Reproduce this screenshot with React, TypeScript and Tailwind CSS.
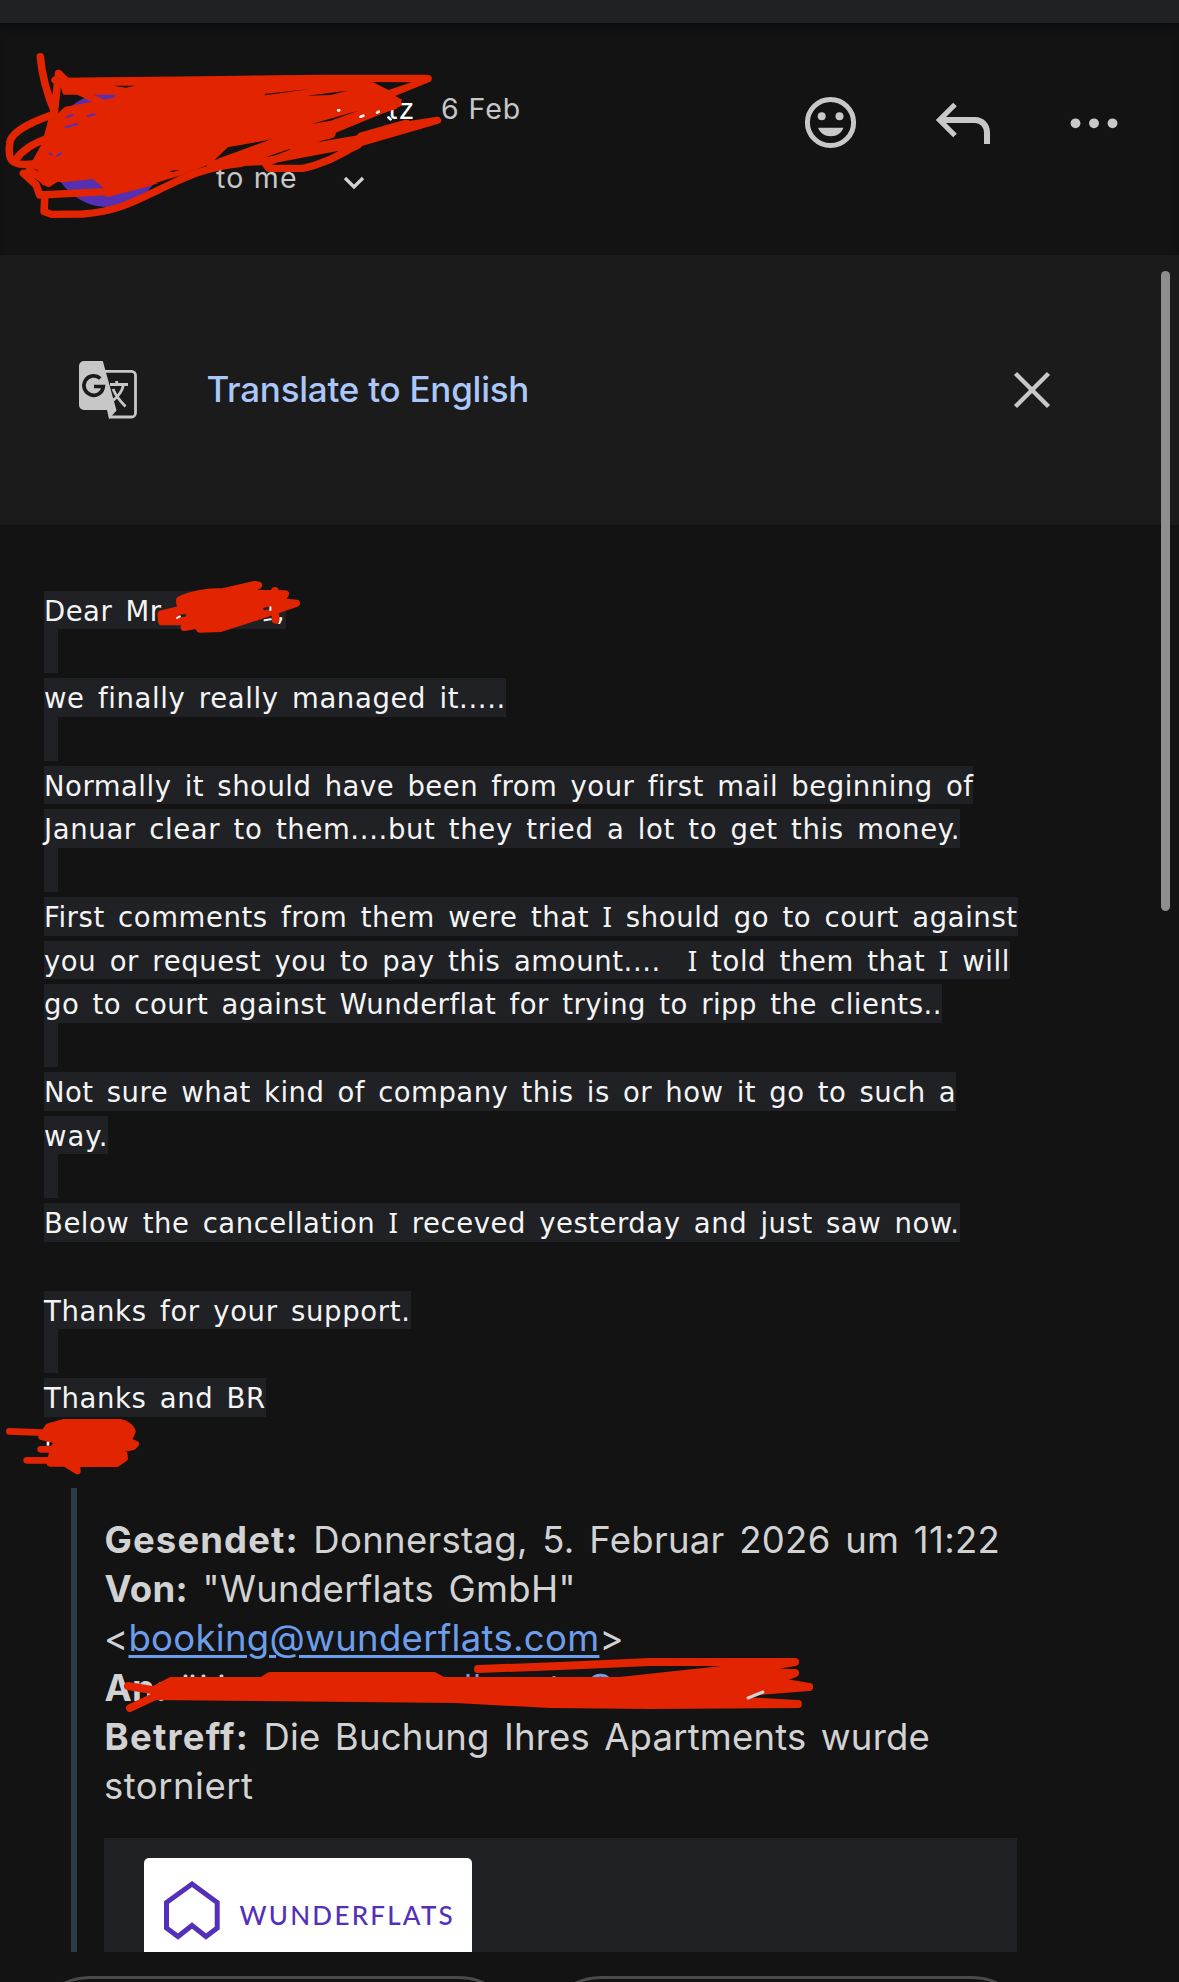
const RED = '#e22400'

type Line = { text: string; tracking: string } | 'mark' | 'gap'

const lines: Line[] = [
  { text: 'we finally really managed it.....', tracking: 'tracking-[0.62px]' },
  'mark',
  { text: 'Normally it should have been from your first mail beginning of', tracking: 'tracking-[0.5px]' },
  { text: 'Januar clear to them....but they tried a lot to get this money.', tracking: 'tracking-[0.64px]' },
  'mark',
  { text: 'First comments from them were that I should go to court against', tracking: 'tracking-[0.58px]' },
  { text: 'you or request you to pay this amount....  I told them that I will', tracking: 'tracking-[0.6px]' },
  { text: 'go to court against Wunderflat for trying to ripp the clients..', tracking: 'tracking-[0.5px]' },
  'mark',
  { text: 'Not sure what kind of company this is or how it go to such a', tracking: 'tracking-[0.475px]' },
  { text: 'way.', tracking: 'tracking-[1px]' },
  'mark',
  { text: 'Below the cancellation I receved yesterday and just saw now.', tracking: 'tracking-[0.53px]' },
  'gap',
  { text: 'Thanks for your support.', tracking: 'tracking-[0.65px]' },
  'mark',
  { text: 'Thanks and BR', tracking: 'tracking-[0.6px]' },
]

const highlight = 'inline-block h-[38.75px] bg-[#202124] pt-px leading-[39.25px] whitespace-pre [word-spacing:4px] align-top'

const Row = ({ line }: { line: Line }) => {
  if (line === 'gap') return <div className="h-[43.75px]" />
  if (line === 'mark') return <div className="-mt-[5px] mb-[5px] h-[43.75px] w-3.5 bg-[#202124]" />
  const parts = line.text.split(/(\bI\b)/)
  return (
    <div className="h-[43.75px]">
      <span className={`${highlight} ${line.tracking}`}>
        {parts.map((part, i) =>
          part === 'I' ? <span key={i} className="font-['Noto_Sans',sans-serif] text-[28px] leading-[0]">I</span> : part
        )}
      </span>
    </div>
  )
}

const Header = () => (
  <header className="flex h-[231px] justify-between bg-[#131314] font-[Inter,sans-serif] text-[#c7c7c7] shadow-[inset_0_8px_10px_-6px_#0c0c0d]">
    <div className="flex">
      <div className="mt-[69px] ml-[51px] size-[114px] rounded-full bg-[#5630b0]" />
      <div className="ml-[51px] pt-[65.5px]">
        <div className="flex h-10 w-[305px] items-center justify-end text-[28.5px] tracking-[0.9px]">
          <span className="mr-[26px] text-white">tz</span>
          <span>6 Feb</span>
        </div>
        <div className="mt-[28.5px] flex h-10 items-center text-[28.5px] tracking-[1.2px]">
          <span>to me</span>
          <svg className="mt-2.5 ml-[44px] h-4 w-6" viewBox="0 0 24 16" fill="none" stroke="#d2d2d2" strokeWidth="3.3">
            <path d="M3 3l9 9 9-9" />
          </svg>
        </div>
      </div>
    </div>
    <div className="mr-[61px] flex pt-[68px]">
      <svg className="h-[60px] w-[60px]" viewBox="0 0 60 60" fill="#c8c8c8">
        <circle cx="30.5" cy="30.5" r="23.1" fill="none" stroke="#c8c8c8" strokeWidth="5" />
        <circle cx="21.700" cy="24.200" r="4" />
        <circle cx="39.500" cy="24.200" r="4" />
        <path d="M18 35.700h25.500c-2 5-6.500 8.500-12.700 8.500s-10.800-3.500-12.800-8.500z" />
      </svg>
      <svg className="ml-[72px] h-[60px] w-[60px]" viewBox="0 0 60 60" fill="none" stroke="#c8c8c8">
        <path d="M23 12.500L7.500 28 23 43.500" strokeWidth="5.200" />
        <path d="M8 28H43c7 0 12 5.500 12 12.500v11.500" strokeWidth="6" />
      </svg>
      <svg className="ml-[72px] h-[60px] w-[54px]" viewBox="0 0 54 60" fill="#c8c8c8">
        <circle cx="11.500" cy="31.300" r="4.900" />
        <circle cx="30" cy="31.300" r="4.900" />
        <circle cx="48.500" cy="31.300" r="4.900" />
      </svg>
    </div>
  </header>
)

const TranslateBar = () => (
  <div className="flex h-[270px] items-center bg-[#1b1b1b] pl-[79px]">
    <svg className="size-[58px]" viewBox="0 0 58 58">
      <path d="M25 10.300h27.500a4 4 0 014 4v37.700a4 4 0 01-4 4H30" fill="none" stroke="#c7c7c7" strokeWidth="2.800" />
      <path d="M31 23.500h18M37.700 20v3.500M44.500 24c-1.500 7-6 12-11 16M34 28c2.500 6 7 12 12.500 17.500" fill="none" stroke="#c7c7c7" strokeWidth="2.800" />
      <path d="M5 0h18.800L37.500 49.500 30 58 28 49H5a5 5 0 01-5-5V5a5 5 0 015-5z" fill="#c7c7c7" />
      <path d="M21.300 17.500A9.700 9.700 0 1024.300 25.500H15" fill="none" stroke="#1b1b1b" strokeWidth="3.700" />
    </svg>
    <span className="-mt-px ml-[69.500px] font-[Inter,sans-serif] text-[35px] font-medium tracking-[-0.25px] text-[#abc7fa]">Translate to English</span>
    <svg className="mr-[127px] ml-auto size-10" viewBox="0 0 40 40" stroke="#c8c8c8" strokeWidth="4.400">
      <path d="M3.500 3.500l33 33M36.500 3.500l-33 33" />
    </svg>
  </div>
)

const Quote = () => (
  <div className="mt-[22px] ml-[71px] flex h-[464px] overflow-hidden border-l-[6px] border-[#2b3d44]">
    <div className="w-[940px] pt-[28px] pl-[27px] font-[Inter,sans-serif] text-[36.500px] leading-[49.200px] tracking-[0.3px] text-[#d2d2d3] [word-spacing:4px]">
      <div className="ml-[0.500px]"><b className="tracking-[1.100px]">Gesendet:</b> Donnerstag, 5. Februar 2026 um 11:22</div>
      <div className="ml-[0.500px]"><b>Von:</b> "Wunderflats GmbH"</div>
      <div>&lt;<span className="text-[#6d9eeb] underline decoration-[3px] underline-offset-[4px]">booking@wunderflats.com</span>&gt;</div>
      <div className="ml-[0.500px]"><b>An:</b></div>
      <div className="ml-[0.500px] tracking-[0.200px] [word-spacing:3.800px]"><b className="tracking-[1.250px]">Betreff:</b> Die Buchung Ihres Apartments wurde</div>
      <div className="tracking-[0.500px]">storniert</div>
      <div className="mt-[27px] h-[130px] bg-[#202124] pt-5 pl-10">
        <div className="flex h-[110px] w-[328px] rounded-t-[5px] bg-white">
          <svg className="mt-[21px] ml-[19px] h-[64px] w-[58px]" viewBox="0 0 58 64" fill="none" stroke="#5430b8" strokeWidth="5">
            <path d="M29 5L54.200 23.500V49L43 57.500 29 46.500 15 57.500 3.500 49V23.500z" />
          </svg>
          <span className="mt-[41px] ml-[18.500px] font-[Lato,sans-serif] text-[26px] leading-8 font-medium tracking-[2.250px] text-[#5430b8]">WUNDERFLATS</span>
        </div>
      </div>
    </div>
  </div>
)

const Scribbles = () => (
  <>
    <svg className="absolute top-0 left-0 h-[270px] w-[540px]" viewBox="0 0 1568 810" preserveAspectRatio="none" fill="none" stroke={RED} strokeWidth="22" strokeLinecap="round" strokeLinejoin="round">
      <path d="M100 495L175 520 230 450 150 400z" fill={RED} />
      <path fill={RED} strokeWidth="4" d="M170 235L650 230 930 226 1240 226 1130 280 1165 300 1150 325 960 385 660 440 610 490 500 535 420 560 310 590 300 560 270 535 180 545 130 540 110 510 135 460 140 370 190 322 330 295 340 282 185 282z" />
      <path d="M117 170C122 230 140 290 158 335L170 220 200 250M158 335L120 480 130 545" />
      <path d="M150 345C80 370 30 400 28 430C22 480 35 495 75 493L140 488" />
      <path d="M45 480C65 450 95 430 140 415M68 520L105 555 115 585 310 575M85 510L140 550 185 520" />
      <path d="M130 590L128 635 150 643 240 642C340 635 400 600 460 570C540 530 600 500 700 490L1000 365 1155 310" />
      <path d="M160 240L300 310M930 240L1243 236 1125 285 1060 250" />
      <path d="M610 490L760 485 1040 430 1270 361 1180 375 1050 415 880 445 770 490 780 505 880 505C950 490 990 460 1040 435" />
      <path d="M640 485L800 425 960 385M850 440L1060 350 1155 310M960 390L900 430" />
      <path d="M700 478L860 425 960 400M1050 412L1180 374" strokeWidth="30" />
      <path fill="#131314" stroke="none" d="M1082 246L1195 247 1128 270zM768 282L905 266 770 286zM890 287L1010 272 960 285zM330 257L392 257 365 263zM905 372L1040 332 960 362zM452 549L520 527 470 551zM492 513L523 509 500 517z" />
      <path d="M1047 350l8-3M1095 338l5-3M1128 352l6 6M982 331h3" stroke="#fff" strokeWidth="8" />
      <path d="M190 382l34-10M195 350l16-4M255 348l20-5M145 460l4 4M165 468l12-8" stroke="#5630b0" strokeWidth="6" />
    </svg>
    <svg className="absolute top-[560px] left-0 h-[110px] w-[320px]" viewBox="0 0 929 330" preserveAspectRatio="none" fill={RED} stroke={RED} strokeWidth="22" strokeLinecap="round" strokeLinejoin="round">
      <path d="M522 120C560 100 600 95 650 95L740 74 750 76 700 100 828 102 815 125 860 130 745 170 640 205 580 207 575 195 535 202 550 185 470 185 468 162 525 148z" />
      <path d="M798 92L800 180" fill="none" />
      <path d="M522 168l14-2M768 147l12-3" stroke="#202124" strokeWidth="8" />
      <path d="M514 174l8-5M768 181l18-3M785 142v8" stroke="#f4f4f4" strokeWidth="6" />
    </svg>
    <svg className="absolute top-[1410px] left-0 h-[70px] w-[150px]" viewBox="0 0 450 210" fill={RED} stroke={RED} strokeWidth="20" strokeLinecap="round" strokeLinejoin="round">
      <path d="M28 64L130 68M122 118L160 118M80 151L160 151" />
      <path d="M145 50L190 37 360 37C380 40 396 55 397 65L385 92 407 102 400 110 370 116 374 145 350 161 230 161 232 183 195 160 150 160 160 115 175 92 125 80z" />
      <path d="M144 95v12" stroke="#f4f4f4" strokeWidth="8" strokeLinecap="butt" />
    </svg>
    <svg className="absolute top-[1640px] left-[100px] h-[80px] w-[740px]" viewBox="100 1640 740 80" fill="none" stroke={RED} strokeWidth="8" strokeLinecap="round" strokeLinejoin="round">
      <path d="M185 1676h1M192 1676h1M203 1676h1M221 1676h1" stroke="#d2d2d3" strokeWidth="3" />
      <path d="M468 1674v5M477 1674v5M592 1679c4-5 13-5 17 0M554 1676v2M671 1675v2" stroke="#6d9eeb" strokeWidth="3" strokeLinecap="butt" />
      <path fill={RED} d="M171 1681L262 1681 270 1676 434 1676 443 1681 620 1681 740 1668 793 1674 774 1681 809 1687 748 1692 745 1701 797 1704 650 1705 550 1704 455 1699 250 1697 155 1696 154 1690z" />
      <path d="M478 1669L560 1666 650 1662 795 1662 720 1675M128 1686L170 1693M130 1708L160 1694M740 1687L809 1687M740 1704L798 1704M730 1674L795 1673" />
      <path d="M748 1698l15-6" stroke="#d2d2d3" strokeWidth="3" />
    </svg>
  </>
)

const App = () => {
  return (
    <div className="relative h-[1982px] w-[1179px] overflow-hidden bg-[#131314]">
      <div className="h-[23px] bg-[#1f2122]" />
      <div className="h-px bg-[#0c0c0d]" />
      <Header />
      <TranslateBar />
      <main className="pt-[65.500px] pl-11 font-['DejaVu_Sans',sans-serif] text-[27.500px] text-[#f4f4f4]">
        <div className="h-[43.750px]">
          <span className={`${highlight} w-[241.500px] tracking-[0.5px]`}>
            <span className="inline-block w-[232px]">Dear Mr</span>,
          </span>
        </div>
        <Row line="mark" />
        {lines.map((line, i) => (
          <Row key={i} line={line} />
        ))}
        <div className="h-[44.250px]" />
      </main>
      <Quote />
      <div className="flex gap-[22px] pt-6 pl-[30px]">
        <div className="h-[120px] w-[489px] shrink-0 rounded-full border-[3px] border-[#4a4a4c]" />
        <div className="h-[120px] w-[491px] shrink-0 rounded-full border-[3px] border-[#4a4a4c]" />
      </div>
      <Scribbles />
      <div className="absolute top-[271px] left-[1161px] h-[640px] w-[9px] rounded-full bg-[#8e8e8e]" />
    </div>
  )
}

export default App
